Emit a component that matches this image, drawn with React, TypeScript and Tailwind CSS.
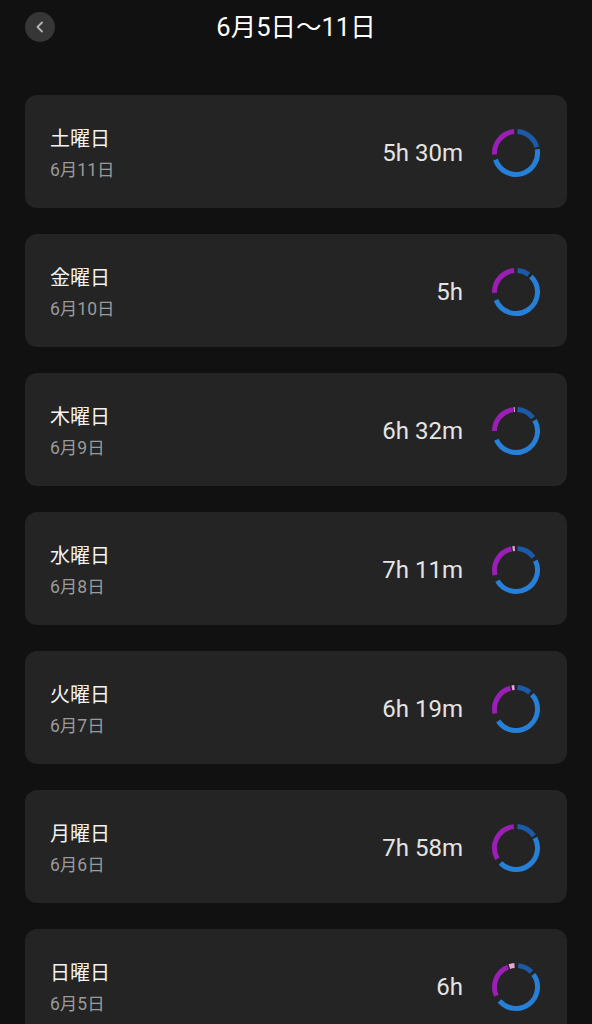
import React from 'react'

type Seg = { from: number; to: number; color: string }

type Day = {
  name: string
  date: string
  total: string
  segs: Seg[]
}

const DEEP = '#1c5aa8'
const LIGHT = '#2680d8'
const REM = '#9a1fb5'
const AWAKE = '#e6a6d4'

const days: Day[] = [
  {
    name: '土曜日',
    date: '6月11日',
    total: '5h 30m',
    segs: [
      { from: 4, to: 74, color: DEEP },
      { from: 80, to: 252, color: LIGHT },
      { from: 266, to: 355, color: REM },
    ],
  },
  {
    name: '金曜日',
    date: '6月10日',
    total: '5h',
    segs: [
      { from: 4, to: 36, color: DEEP },
      { from: 44, to: 248, color: LIGHT },
      { from: 268, to: 355, color: REM },
    ],
  },
  {
    name: '木曜日',
    date: '6月9日',
    total: '6h 32m',
    segs: [
      { from: 4, to: 52, color: DEEP },
      { from: 60, to: 246, color: LIGHT },
      { from: 270, to: 352, color: REM },
      { from: 354, to: 357, color: AWAKE },
    ],
  },
  {
    name: '水曜日',
    date: '6月8日',
    total: '7h 11m',
    segs: [
      { from: 4, to: 54, color: DEEP },
      { from: 64, to: 240, color: LIGHT },
      { from: 256, to: 348, color: REM },
      { from: 351, to: 357, color: AWAKE },
    ],
  },
  {
    name: '火曜日',
    date: '6月7日',
    total: '6h 19m',
    segs: [
      { from: 4, to: 40, color: DEEP },
      { from: 48, to: 236, color: LIGHT },
      { from: 258, to: 345, color: REM },
      { from: 349, to: 356, color: AWAKE },
    ],
  },
  {
    name: '月曜日',
    date: '6月6日',
    total: '7h 58m',
    segs: [
      { from: 4, to: 56, color: DEEP },
      { from: 62, to: 226, color: LIGHT },
      { from: 240, to: 354, color: REM },
    ],
  },
  {
    name: '日曜日',
    date: '6月5日',
    total: '6h',
    segs: [
      { from: 6, to: 46, color: DEEP },
      { from: 54, to: 230, color: LIGHT },
      { from: 246, to: 338, color: REM },
      { from: 342, to: 356, color: AWAKE },
    ],
  },
]

function arcPath(cx: number, cy: number, r: number, from: number, to: number) {
  const rad = (a: number) => ((a - 90) * Math.PI) / 180
  const x1 = cx + r * Math.cos(rad(from))
  const y1 = cy + r * Math.sin(rad(from))
  const x2 = cx + r * Math.cos(rad(to))
  const y2 = cy + r * Math.sin(rad(to))
  const large = to - from > 180 ? 1 : 0
  return `M ${x1} ${y1} A ${r} ${r} 0 ${large} 1 ${x2} ${y2}`
}

function Donut({ segs }: { segs: Seg[] }) {
  return (
    <svg width="50" height="50" viewBox="0 0 50 50" className="mt-[2px] shrink-0">
      {segs.map((s, i) => (
        <path
          key={i}
          d={arcPath(25, 25, 21.5, s.from, s.to)}
          fill="none"
          stroke={s.color}
          strokeWidth={5}
        />
      ))}
    </svg>
  )
}

function DayCard({ day }: { day: Day }) {
  return (
    <div className="flex h-[113px] items-center rounded-[12px] bg-[#242424] pl-[25px] pr-[26px]">
      <div className="flex flex-1 flex-col pt-[3px]">
        <span className="text-[20px] leading-[28px] text-[#f2f2f2]">{day.name}</span>
        <span className="mt-[5px] text-[17.5px] leading-[24px] text-[#9a9a9a]">{day.date}</span>
      </div>
      <span className="mr-[28px] mt-[3px] text-[24px] leading-[30px] text-[#e4e4e4]">{day.total}</span>
      <Donut segs={day.segs} />
    </div>
  )
}

export default function App() {
  return (
    <div
      className="h-[1024px] w-[592px] overflow-hidden bg-[#111111]"
      style={{ fontFamily: "Roboto, 'Noto Sans CJK JP', sans-serif" }}
    >
      <div className="relative flex h-[54px] items-center justify-center">
        <button className="absolute left-[25px] top-[12px] flex h-[30px] w-[30px] items-center justify-center rounded-full bg-[#363636]">
          <svg width="14" height="14" viewBox="0 0 14 14">
            <path d="M9 2.5 L4.5 7 L9 11.5" fill="none" stroke="#b4b4b4" strokeWidth="1.8" strokeLinecap="round" strokeLinejoin="round" />
          </svg>
        </button>
        <span className="text-[25.5px] leading-[32px] text-white">6月5日〜11日</span>
      </div>
      <div className="mt-[41px] flex flex-col gap-[26px] px-[25px]">
        {days.map((d) => (
          <DayCard key={d.name} day={d} />
        ))}
      </div>
    </div>
  )
}
